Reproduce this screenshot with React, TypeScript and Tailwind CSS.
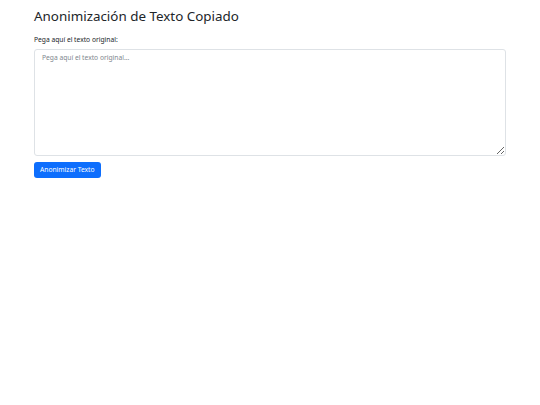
import React, { useState } from 'react';

export default function App() {
  const [text, setText] = useState('');

  return (
    <div className="min-h-[405px] w-full bg-white px-[34px] pt-[8px] text-[#212529] [font-family:'Noto_Sans',sans-serif]">
      <h2 className="text-[13.4px] leading-[16px] font-normal">Anonimización de Texto Copiado</h2>

      <label className="mt-[11px] block text-[6.7px] leading-[10px] font-normal text-[#212529]">
        Pega aquí el texto original:
      </label>
      <textarea
        value={text}
        onChange={(e) => setText(e.target.value)}
        placeholder="Pega aquí el texto original..."
        className="mt-[4px] block h-[107px] w-full rounded-[3px] border border-[#dee2e6] bg-white px-[7px] py-[3px] text-[6.7px] leading-[10px] text-[#212529] outline-none placeholder:text-[#80878e]"
      />

      <button className="mt-[6px] flex h-[16px] items-center rounded-[3px] bg-[#0d6efd] px-[6px] text-[6.7px] font-normal text-white">
        Anonimizar Texto
      </button>
    </div>
  );
}
